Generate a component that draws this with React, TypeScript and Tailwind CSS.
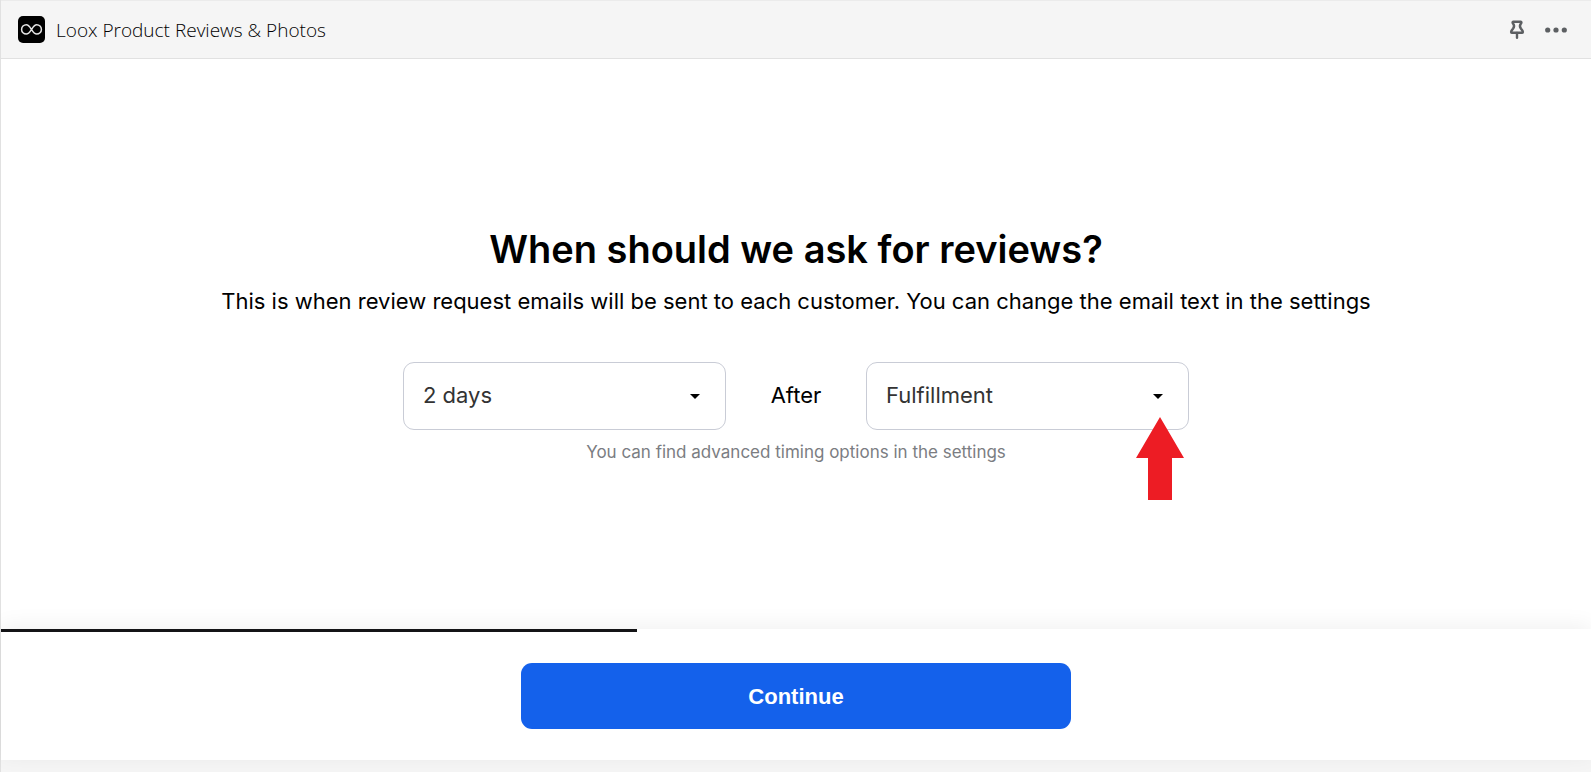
import { useState } from "react";

interface SelectFieldProps {
  label: string;
  value: string;
  options: string[];
  onChange: (value: string) => void;
}

function LooxLogo() {
  return (
    <svg viewBox="0 0 27 27" className="size-[27px]" aria-hidden="true">
      <rect width="27" height="27" rx="5" fill="#000" />
      <path
        d="M13.5 13.5C11.9 11 10.7 8.700 8.300 8.700a4.700 4.700 0 1 0 0 9.400c2.400 0 3.600-2.100 5.200-4.600C15.100 11 16.300 8.700 18.700 8.700a4.700 4.700 0 1 1 0 9.400c-2.400 0-3.600-2.100-5.200-4.600Z"
        fill="none"
        stroke="#e5e5e5"
        strokeWidth="1.5"
      />
    </svg>
  );
}

function PinIcon() {
  return (
    <svg
      viewBox="0 0 16 20"
      className="h-5 w-4"
      fill="none"
      stroke="#5c5f62"
      strokeWidth="2.4"
      strokeLinecap="round"
      strokeLinejoin="round"
      aria-hidden="true"
    >
      <path d="M4.200 1.800h7.600c.8 0 .8 1 .3 1.500C10.600 5 10.600 7 12 8.800c1 1.100 1.900 1.900 1.900 3.300 0 .5-.2.700-.7.700H2.800c-.5 0-.7-.2-.7-.7C2.100 10.700 3 9.900 4 8.800 5.400 7 5.400 5 3.900 3.300c-.5-.5-.5-1.500.3-1.500Z" />
      <path d="M8 13v4.800" />
    </svg>
  );
}

function DotsIcon() {
  return (
    <svg viewBox="0 0 22 6" className="h-[6px] w-[22px]" fill="#5c5f62" aria-hidden="true">
      <circle cx="2.700" cy="3" r="2.600" />
      <circle cx="11" cy="3" r="2.600" />
      <circle cx="19.300" cy="3" r="2.600" />
    </svg>
  );
}

function SelectField({ label, value, options, onChange }: SelectFieldProps) {
  return (
    <div className="relative w-[323px]">
      <select
        aria-label={label}
        value={value}
        onChange={(e) => onChange(e.target.value)}
        className="h-[68px] w-full appearance-none rounded-[11px] border border-[#c9ccd6] bg-white pr-12 pl-[19px] text-[22px] text-[#333]"
      >
        {options.map((option) => (
          <option key={option}>{option}</option>
        ))}
      </select>
      <svg
        viewBox="0 0 10 5"
        className="pointer-events-none absolute top-8 right-[26px] h-[5px] w-[10px]"
        aria-hidden="true"
      >
        <path d="M0 0h10L5 5Z" fill="#000" />
      </svg>
    </div>
  );
}

export default function App() {
  const [delay, setDelay] = useState("2 days");
  const [trigger, setTrigger] = useState("Fulfillment");
  const progress = 40;

  return (
    <div className="flex min-h-screen flex-col border-l border-[#e1e1e1] bg-[#f5f5f5] font-['Inter',sans-serif] text-black">
      {/* App bar */}
      <header className="flex h-[59px] items-center border-t border-b border-t-[#ebebeb] border-b-[#e1e1e1] bg-[#f5f5f5] pr-6 pl-[17px]">
        <LooxLogo />
        <span className="ml-[11px] pt-px font-['Open_Sans',sans-serif] text-[19px] font-light text-black">
          Loox Product Reviews &amp; Photos
        </span>
        <div className="ml-auto flex items-center gap-5">
          <button type="button" aria-label="Pin app">
            <PinIcon />
          </button>
          <button type="button" aria-label="More actions">
            <DotsIcon />
          </button>
        </div>
      </header>

      {/* Timing settings */}
      <main className="flex flex-1 flex-col items-center justify-center bg-white pt-0.5">
        <h1 className="text-[38px] leading-[48px] font-semibold">When should we ask for reviews?</h1>
        <p className="mt-3 text-[22px] leading-8">
          This is when review request emails will be sent to each customer. You can change the email text in the
          settings
        </p>
        <div className="mt-[45px] flex items-center">
          <SelectField
            label="Delay"
            value={delay}
            options={["2 days", "7 days", "14 days", "30 days"]}
            onChange={setDelay}
          />
          <span className="w-[140px] text-center text-[22px]">After</span>
          <div className="relative">
            <SelectField
              label="Trigger"
              value={trigger}
              options={["Fulfillment", "Delivery", "Purchase"]}
              onChange={setTrigger}
            />
            <svg
              viewBox="0 0 48 83"
              className="pointer-events-none absolute top-[55px] right-[5px] h-[83px] w-12"
              aria-hidden="true"
            >
              <path d="M24 0 48 41H36V83H12V41H0Z" fill="#ed1c24" />
            </svg>
          </div>
        </div>
        <p className="mt-2 text-[17px] leading-7 text-[#7b7d82]">You can find advanced timing options in the settings</p>
      </main>

      {/* Progress and next step */}
      <footer className="relative mb-3 bg-white shadow-[0_-4px_20px_rgba(0,0,0,0.06)]">
        <div className="h-[3px] bg-[#141416]" style={{ width: `${progress}%` }} />
        <div className="flex justify-center py-[31px]">
          <button
            type="button"
            className="h-[66px] w-[550px] rounded-[11px] bg-[#1461eb] font-['Liberation_Sans',sans-serif] text-[22px] font-bold text-white"
          >
            Continue
          </button>
        </div>
      </footer>
    </div>
  );
}
